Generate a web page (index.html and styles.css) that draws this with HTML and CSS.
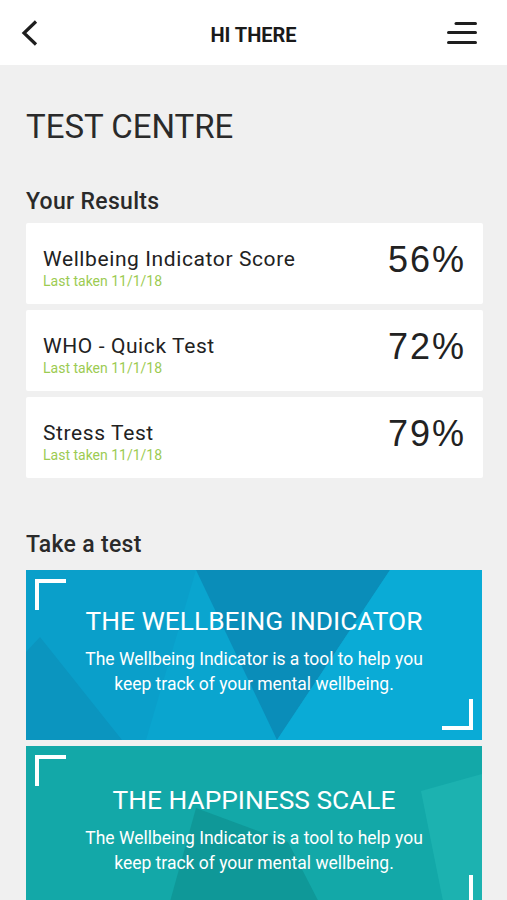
FILE: index.html
```html
<!DOCTYPE html>
<html>
    <head>
        <title>Test Centre</title>
        <link rel="stylesheet" href="styles.css">
    </head>
    <body>
        <div class="topbar">
            <svg class="back" width="20" height="28" viewBox="0 0 20 28">
                <polyline points="16,2.5 4,14 16,25.5" fill="none" stroke="#1e1e1e" stroke-width="3.2"/>
            </svg>
            <div class="topbar-title">HI THERE</div>
            <svg class="menu" width="30" height="24" viewBox="0 0 30 24">
                <line x1="9" y1="2.5" x2="28.5" y2="2.5" stroke="#1e1e1e" stroke-width="3" stroke-linecap="round"/>
                <line x1="1.5" y1="11.5" x2="28.5" y2="11.5" stroke="#1e1e1e" stroke-width="3" stroke-linecap="round"/>
                <line x1="1.5" y1="21.5" x2="28.5" y2="21.5" stroke="#1e1e1e" stroke-width="3" stroke-linecap="round"/>
            </svg>
        </div>

        <div class="content">
            <h1>TEST CENTRE</h1>

            <h2 class="results-heading">Your Results</h2>
            <div class="results">
                <div class="result">
                    <div class="result-text">
                        <div class="result-name">Wellbeing Indicator Score</div>
                        <div class="result-date">Last taken 11/1/18</div>
                    </div>
                    <div class="result-score">56%</div>
                </div>
                <div class="result">
                    <div class="result-text">
                        <div class="result-name">WHO - Quick Test</div>
                        <div class="result-date">Last taken 11/1/18</div>
                    </div>
                    <div class="result-score">72%</div>
                </div>
                <div class="result">
                    <div class="result-text">
                        <div class="result-name">Stress Test</div>
                        <div class="result-date">Last taken 11/1/18</div>
                    </div>
                    <div class="result-score">79%</div>
                </div>
            </div>

            <h2 class="tests-heading">Take a test</h2>
            <div class="tests">
                <div class="test test-blue">
                    <svg class="test-bg" viewBox="0 0 456 170" preserveAspectRatio="none">
                        <polygon points="0,0 170,0 120,170 0,170" fill="#0a9fca"/>
                        <polygon points="0,82 14,67 96,170 0,170" fill="#0b95bf"/>
                        <polygon points="170,0 364,0 251,170" fill="#0a8db9"/>
                        <polygon points="364,0 456,0 456,170 251,170" fill="#0aabd6"/>
                    </svg>
                    <span class="corner corner-tl"></span>
                    <span class="corner corner-br"></span>
                    <div class="test-title">THE WELLBEING INDICATOR</div>
                    <p class="test-desc">The Wellbeing Indicator is a tool to help you<br>keep track of your mental wellbeing.</p>
                </div>
                <div class="test test-teal">
                    <svg class="test-bg" viewBox="0 0 456 170" preserveAspectRatio="none">
                        <polygon points="170,62 262,96 300,170 140,170" fill="#0f9898"/>
                        <polygon points="395,45 456,28 456,170 420,170" fill="#1cb2b0"/>
                    </svg>
                    <span class="corner corner-tl"></span>
                    <span class="corner corner-br"></span>
                    <div class="test-title">THE HAPPINESS SCALE</div>
                    <p class="test-desc">The Wellbeing Indicator is a tool to help you<br>keep track of your mental wellbeing.</p>
                </div>
            </div>
        </div>
    </body>
</html>
```

FILE: styles.css
```css
html {
    height:100%;
}

body {
    margin:0;
    padding:0;
    min-height:100%;
    background:#F0F0F0;
    font-family: Roboto, "Liberation Sans", sans-serif;
    color:#222;
    overflow:hidden;
}

.topbar {
    height:65px;
    background:white;
    display:grid;
    grid-template-columns:1fr auto 1fr;
    align-items:center;
    padding:0 30px;
}

.topbar .back {
    margin-left:-10px;
}

.topbar .menu {
    justify-self:end;
}

.topbar-title {
    font-size:20px;
    font-weight:bold;
    line-height:22px;
    color:#1a1a1a;
    padding-top:4px;
}

.content {
    padding:42px 24px 0 26px;
}

h1 {
    margin:0;
    font-size:33px;
    font-weight:normal;
    line-height:40px;
    color:#2a2a2a;
}

h2 {
    margin:0;
    font-size:23px;
    font-weight:500;
    line-height:26px;
    letter-spacing:0.3px;
    color:#2a2a2a;
}

.results-heading {
    margin-top:42px;
}

.results {
    margin-top:8px;
    display:flex;
    flex-direction:column;
    gap:6px;
}

.result {
    height:81px;
    box-sizing:border-box;
    background:white;
    border-radius:2px;
    display:flex;
    justify-content:space-between;
    padding:24px 17px 0 17px;
}

.result-name {
    font-size:21px;
    line-height:24px;
    letter-spacing:0.6px;
    color:#222;
}

.result-date {
    margin-top:2px;
    font-size:14px;
    line-height:16px;
    color:#9ccb52;
}

.result-score {
    margin-top:-7px;
    font-family: "Liberation Sans", sans-serif;
    font-size:36px;
    line-height:40px;
    letter-spacing:2px;
    color:#222;
}

.tests-heading {
    margin-top:54px;
}

.tests {
    margin-top:12px;
    margin-right:1px;
    display:flex;
    flex-direction:column;
    gap:6px;
}

.test {
    position:relative;
    height:170px;
    box-sizing:border-box;
    padding-top:35px;
    text-align:center;
    color:white;
    overflow:hidden;
}

.test-blue {
    background:#0aa5cf;
}

.test-teal {
    background:#13a8a8;
    padding-top:38px;
}

.test-bg {
    position:absolute;
    top:0;
    left:0;
    width:100%;
    height:100%;
}

.corner {
    position:absolute;
    width:27px;
    height:27px;
    border:0 solid white;
}

.corner-tl {
    top:9px;
    left:9px;
    border-top-width:4px;
    border-left-width:4px;
}

.corner-br {
    bottom:10px;
    right:9px;
    border-bottom-width:4px;
    border-right-width:4px;
}

.test-title {
    position:relative;
    font-size:26.3px;
    line-height:32px;
}

.test-desc {
    position:relative;
    margin:10px 0 0 0;
    font-size:17.5px;
    line-height:25px;
}
```
